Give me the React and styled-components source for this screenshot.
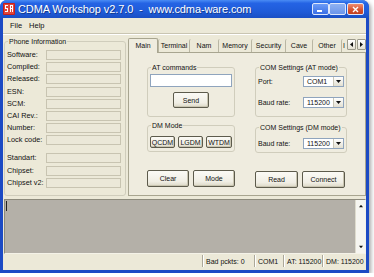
import React from 'react';
import styled, { createGlobalStyle } from 'styled-components';

const GlobalStyle = createGlobalStyle`
  html, body {
    margin: 0;
    padding: 0;
    background: #ffffff;
  }
  body {
    font-family: "Liberation Sans", Arial, sans-serif;
    font-size: 7px;
    color: #111;
  }
  * {
    box-sizing: border-box;
  }
`;

// Window chrome
const Window = styled.div`
  width: 369px;
  height: 273px;
  display: flex;
  flex-direction: column;
  padding: 0 3px 3px;
  background: #1c4ac4;
  border-radius: 7px 7px 0 0;
  box-shadow: 2px 2px 4px rgba(0, 0, 0, 0.35);
  overflow: hidden;
`;

const TitleBar = styled.div`
  height: 18px;
  margin: 0 -3px;
  padding: 0 5px 0 3px;
  display: flex;
  align-items: center;
  background: linear-gradient(180deg, #4a8cf4 0%, #2463e4 18%, #1f5bd8 65%, #1a4fc4 100%);
`;

const Title = styled.span`
  flex: 1;
  margin-left: 3px;
  color: #ffffff;
  font-size: 11px;
  letter-spacing: -0.1px;
  text-shadow: 1px 1px 0 rgba(0, 0, 0, 0.35);
  white-space: pre;
`;

const CaptionButton = styled.div`
  width: 17px;
  height: 12px;
  margin-left: ${({ $gap }) => $gap || 0}px;
  border: 1px solid #dfe8fb;
  border-radius: 2px;
  display: flex;
  align-items: center;
  justify-content: center;
  background: ${({ $kind }) =>
    $kind === 'close'
      ? 'linear-gradient(180deg, #ef8d70 0%, #d5502f 60%, #c2401f 100%)'
      : $kind === 'max'
      ? 'linear-gradient(180deg, #8fb2f2 0%, #6b95ea 100%)'
      : 'linear-gradient(180deg, #6d9cf6 0%, #3a6fe6 100%)'};
`;

const Client = styled.div`
  flex: 1;
  display: flex;
  flex-direction: column;
  background: #ece9d8;
`;

const MenuBar = styled.div`
  height: 16px;
  display: flex;
  align-items: center;
  gap: 7px;
  padding-left: 7px;
  border-bottom: 1px solid #c9c5b2;
  box-shadow: 0 1px 0 #ffffff;
  font-size: 7.5px;
`;

const MainRow = styled.div`
  height: 162px;
  display: flex;
  gap: 2px;
  padding: 3px 0 0 1px;
`;

// Group boxes
const Group = styled.fieldset`
  margin: 0;
  min-width: 0;
  width: ${({ $w }) => $w}px;
  padding: ${({ $pad }) => $pad};
  border: 1px solid #d0cdbc;
  border-radius: 3px;
`;

const Legend = styled.legend`
  padding: 0 1px;
  margin-left: 1px;
  line-height: 9px;
  font-size: 7px;
  white-space: nowrap;
  color: #111;
`;

const InfoGrid = styled.div`
  display: grid;
  grid-template-columns: 39px 75px;
  row-gap: 2.2px;
  align-items: center;
  margin-top: ${({ $top }) => $top}px;
`;

const InfoLabel = styled.span`
  line-height: 10px;
  white-space: nowrap;
  font-size: 7.3px;
`;

const InfoField = styled.div`
  height: 10px;
  border: 1px solid #c8c4b1;
  background: #ebe8d8;
`;

// Tabs
const TabControl = styled.div`
  flex: 1;
  display: flex;
  flex-direction: column;
`;

const TabStrip = styled.div`
  height: 15px;
  display: flex;
  align-items: flex-end;
  position: relative;
  z-index: 1;
`;

const Tab = styled.div`
  width: ${({ $w }) => $w}px;
  height: ${({ $active }) => ($active ? 15 : 13)}px;
  display: flex;
  align-items: center;
  justify-content: center;
  overflow: hidden;
  white-space: nowrap;
  border-left: 1px solid ${({ $active }) => ($active ? '#a8a590' : '#b9b6a3')};
  border-top: ${({ $active }) => ($active ? '1px solid #a8a590' : 'none')};
  border-right: ${({ $active }) => ($active ? '1px solid #a8a590' : 'none')};
  border-radius: 2px 2px 0 0;
  background: ${({ $active }) => ($active ? '#efecdf' : '#ece9d8')};
  margin-bottom: ${({ $active }) => ($active ? -1 : 0)}px;
  padding-bottom: ${({ $active }) => ($active ? 1 : 0)}px;
`;

const ScrollArrows = styled.div`
  display: flex;
  gap: 1px;
  margin: 0 0 2px 1px;
`;

const ArrowBtn = styled.div`
  width: 9px;
  height: 11px;
  display: flex;
  align-items: center;
  justify-content: center;
  border: 1px solid #9c9a8c;
  border-radius: 1px;
  background: linear-gradient(180deg, #ffffff 0%, #e4e1d3 100%);
`;

const Panel = styled.div`
  flex: 1;
  display: flex;
  gap: 20px;
  padding: 10px 0 0 18px;
  border: 1px solid #a8a590;
  background: #efecdf;
`;

const Column = styled.div`
  display: flex;
  flex-direction: column;
`;

const TextInput = styled.div`
  height: 13px;
  margin-top: 2px;
  border: 1px solid #8fa4bd;
  background: #ffffff;
`;

const Button = styled.div`
  width: ${({ $w }) => $w}px;
  height: ${({ $h }) => $h || 17}px;
  display: flex;
  align-items: center;
  justify-content: center;
  border: 1px solid #5d5b4c;
  border-radius: 2px;
  background: linear-gradient(180deg, #fbfaf5 0%, #f0eee4 70%, #dcd8c6 100%);
  box-shadow: inset -1px -1px 0 #c9c5b1;
  font-size: 7px;
`;

const Row = styled.div`
  display: flex;
  align-items: center;
  gap: ${({ $gap }) => $gap || 0}px;
  margin-top: ${({ $top }) => $top || 0}px;
  justify-content: ${({ $justify }) => $justify || 'flex-start'};
`;

const FieldLabel = styled.span`
  width: 45px;
  white-space: nowrap;
`;

const Select = styled.div`
  width: 41px;
  height: 11px;
  display: flex;
  align-items: center;
  border: 1px solid #8fa4bd;
  background: #ffffff;
`;

const SelectValue = styled.span`
  flex: 1;
  padding-left: 3px;
  line-height: 9px;
`;

const SelectArrow = styled.div`
  width: 10px;
  height: 9px;
  display: flex;
  align-items: center;
  justify-content: center;
  border-left: 1px solid #c9c6b6;
  background: linear-gradient(180deg, #ffffff 0%, #e2dfd1 100%);
`;

// Log and status bar
const LogArea = styled.div`
  height: 55px;
  margin: 3px 0 0 1px;
  display: flex;
  border: 1px solid;
  border-color: #8c8a7c #f4f2e8 #f4f2e8 #8c8a7c;
  background: #b4b0a8;
`;

const LogText = styled.div`
  flex: 1;
  padding: 1px 0 0 1px;
`;

const Caret = styled.div`
  width: 1px;
  height: 10px;
  background: #222;
`;

const ScrollBar = styled.div`
  width: 10px;
  display: flex;
  flex-direction: column;
  justify-content: space-between;
  align-items: center;
  padding: 4px 0;
  background: #f6f5f0;
  border-left: 1px solid #dedbcd;
`;

const StatusBar = styled.div`
  height: 12px;
  margin-top: 1px;
  display: flex;
  align-items: stretch;
`;

const StatusPanel = styled.div`
  width: ${({ $w }) => ($w ? `${$w}px` : 'auto')};
  flex: ${({ $w }) => ($w ? 'none' : 1)};
  display: flex;
  align-items: center;
  padding-left: 3px;
  white-space: nowrap;
  border-left: ${({ $first }) => ($first ? 'none' : '1px solid #aca899')};
  box-shadow: ${({ $first }) => ($first ? 'none' : 'inset 1px 0 0 #ffffff')};
`;

const Triangle = ({ dir, size = 5 }) => {
  const pts = {
    up: '0,4 2.5,1 5,4',
    down: '0,1 5,1 2.5,4',
    left: '4,0 4,5 1,2.5',
    right: '1,0 1,5 4,2.5',
  };
  return (
    <svg width={size} height={size} viewBox="0 0 5 5">
      <polygon points={pts[dir]} fill="#111" />
    </svg>
  );
};

const AppIcon = () => (
  <svg width="12" height="12" viewBox="0 0 12 12">
    <rect x="0" y="0" width="12" height="12" rx="1" fill="#c8201c" />
    <rect x="1" y="1" width="10" height="10" fill="#e0463a" />
    <rect x="2" y="2" width="3" height="1" fill="#fff" />
    <rect x="2" y="2" width="1" height="4" fill="#fff" />
    <rect x="2" y="5" width="3" height="1" fill="#fff" />
    <rect x="4" y="5" width="1" height="4" fill="#fff" />
    <rect x="2" y="8" width="3" height="1" fill="#fff" />
    <rect x="7" y="2" width="1" height="7" fill="#fff" />
    <rect x="7" y="2" width="3" height="1" fill="#fff" />
    <rect x="9" y="2" width="1" height="3" fill="#fff" />
    <rect x="7" y="5" width="3" height="1" fill="#fff" />
    <rect x="9" y="6" width="1" height="3" fill="#fff" />
  </svg>
);

const info1 = ['Software:', 'Compiled:', 'Released:', 'ESN:', 'SCM:', 'CAI Rev.:', 'Number:', 'Lock code:'];
const info2 = ['Standart:', 'Chipset:', 'Chipset v2:'];

const tabs = [
  { name: 'Main', w: 30, active: true },
  { name: 'Terminal', w: 31 },
  { name: 'Nam', w: 29 },
  { name: 'Memory', w: 33 },
  { name: 'Security', w: 34 },
  { name: 'Cave', w: 27 },
  { name: 'Other', w: 29 },
  { name: 'I', w: 5 },
];

const ComSelect = ({ value }) => (
  <Select>
    <SelectValue>{value}</SelectValue>
    <SelectArrow>
      <Triangle dir="down" />
    </SelectArrow>
  </Select>
);

export default function App() {
  return (
    <>
      <GlobalStyle />
      <Window>
        <TitleBar>
          <AppIcon />
          <Title>CDMA Workshop v2.7.0  -  www.cdma-ware.com</Title>
          <CaptionButton $kind="min">
            <svg width="7" height="6" viewBox="0 0 7 6">
              <rect x="0" y="4" width="5" height="2" fill="#fff" />
            </svg>
          </CaptionButton>
          <CaptionButton $kind="max" />
          <CaptionButton $kind="close" $gap={1}>
            <svg width="7" height="7" viewBox="0 0 7 7">
              <path d="M1 1 L6 6 M6 1 L1 6" stroke="#fff" strokeWidth="1.4" />
            </svg>
          </CaptionButton>
        </TitleBar>

        <Client>
          <MenuBar>
            <span>File</span>
            <span>Help</span>
          </MenuBar>

          <MainRow>
            {/* Phone information */}
            <Group $w={122} $pad="0 5px 0 2px">
              <Legend>Phone Information</Legend>
              <InfoGrid $top={4}>
                {info1.map((label) => (
                  <React.Fragment key={label}>
                    <InfoLabel>{label}</InfoLabel>
                    <InfoField />
                  </React.Fragment>
                ))}
              </InfoGrid>
              <InfoGrid $top={8}>
                {info2.map((label) => (
                  <React.Fragment key={label}>
                    <InfoLabel>{label}</InfoLabel>
                    <InfoField />
                  </React.Fragment>
                ))}
              </InfoGrid>
            </Group>

            {/* Tabs */}
            <TabControl>
              <TabStrip>
                {tabs.map((t) => (
                  <Tab key={t.name} $w={t.w} $active={t.active}>
                    {t.name}
                  </Tab>
                ))}
                <ScrollArrows>
                  <ArrowBtn>
                    <Triangle dir="left" />
                  </ArrowBtn>
                  <ArrowBtn>
                    <Triangle dir="right" />
                  </ArrowBtn>
                </ScrollArrows>
              </TabStrip>

              <Panel>
                <Column>
                  <Group $w={88} $pad="0 2px 8px 2px">
                    <Legend>AT commands</Legend>
                    <TextInput />
                    <Row $top={5} $justify="center">
                      <Button $w={36} $h={16}>Send</Button>
                    </Row>
                  </Group>
                  <Group $w={88} $pad="0 2px 3px 2px" style={{ marginTop: 4 }}>
                    <Legend>DM Mode</Legend>
                    <Row $top={6} $gap={3}>
                      <Button $w={26} $h={12}>QCDM</Button>
                      <Button $w={26} $h={12}>LGDM</Button>
                      <Button $w={27} $h={12}>WTDM</Button>
                    </Row>
                  </Group>
                  <Row $top={18} $gap={4}>
                    <Button $w={42}>Clear</Button>
                    <Button $w={42}>Mode</Button>
                  </Row>
                </Column>

                <Column>
                  <Group $w={92} $pad="0 2px 8px 2px">
                    <Legend>COM Settings (AT mode)</Legend>
                    <Row $top={4}>
                      <FieldLabel>Port:</FieldLabel>
                      <ComSelect value="COM1" />
                    </Row>
                    <Row $top={10}>
                      <FieldLabel>Baud rate:</FieldLabel>
                      <ComSelect value="115200" />
                    </Row>
                  </Group>
                  <Group $w={92} $pad="0 2px 3px 2px" style={{ marginTop: 6 }}>
                    <Legend>COM Settings (DM mode)</Legend>
                    <Row $top={6}>
                      <FieldLabel>Baud rate:</FieldLabel>
                      <ComSelect value="115200" />
                    </Row>
                  </Group>
                  <Row $top={18} $gap={4}>
                    <Button $w={43}>Read</Button>
                    <Button $w={43}>Connect</Button>
                  </Row>
                </Column>
              </Panel>
            </TabControl>
          </MainRow>

          <LogArea>
            <LogText>
              <Caret />
            </LogText>
            <ScrollBar>
              <Triangle dir="up" size={4} />
              <Triangle dir="down" size={4} />
            </ScrollBar>
          </LogArea>

          <StatusBar>
            <StatusPanel $first />
            <StatusPanel $w={52}>Bad pckts: 0</StatusPanel>
            <StatusPanel $w={29}>COM1</StatusPanel>
            <StatusPanel $w={39}>AT: 115200</StatusPanel>
            <StatusPanel $w={44}>DM: 115200</StatusPanel>
          </StatusBar>
        </Client>
      </Window>
    </>
  );
}
